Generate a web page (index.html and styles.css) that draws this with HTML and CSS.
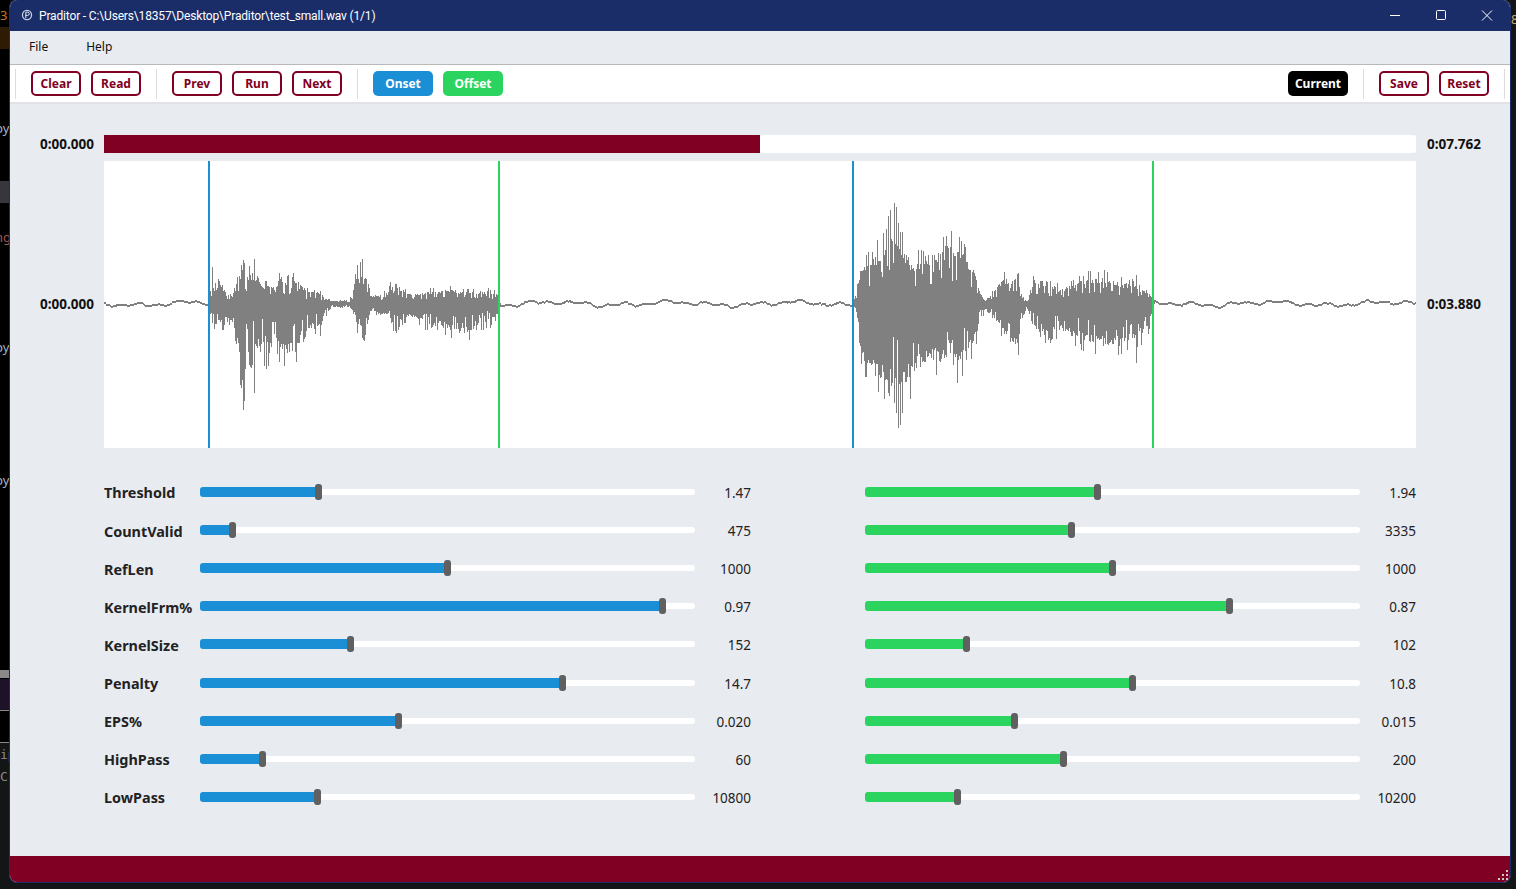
FILE: index.html
```html
<!DOCTYPE html>
<html lang="en">
<head>
    <meta charset="UTF-8">
    <title>Praditor</title>
    <link rel="stylesheet" href="styles.css">
</head>
<body>
    <div class="desktop">
        <div class="bg-strip">
            <span class="bg-block bg-orange"></span>
            <span class="bg-block bg-grey"></span>
            <span class="bg-block bg-light"></span>
            <span class="bg-block bg-purple"></span>
            <span class="bg-block bg-line"></span>
        </div>
        <span class="bg-text bg-t1">3</span>
        <span class="bg-text bg-t2">py</span>
        <span class="bg-text bg-t3">ng</span>
        <span class="bg-text bg-t4">py</span>
        <span class="bg-text bg-t5">py</span>
        <span class="bg-text bg-t6">ip</span>
        <span class="bg-text bg-t7">C</span>
        <span class="bg-text bg-t8">8</span>
    </div>

    <div class="window">
        <div class="titlebar">
            <svg class="app-icon" width="12" height="12" viewBox="0 0 12 12">
                <circle cx="6" cy="6" r="5.2" fill="#c9cfe0"/>
                <circle cx="6" cy="6" r="3.9" fill="#1b2d68"/>
                <path d="M4.8 9V3.2h1.8a1.5 1.5 0 0 1 0 3.2H4.8" fill="none" stroke="#e6e9f2" stroke-width="1"/>
            </svg>
            <span class="title">Praditor - C:\Users\18357\Desktop\Praditor\test_small.wav (1/1)</span>
            <div class="win-controls">
                <svg class="win-btn" width="46" height="31" viewBox="0 0 46 31"><path d="M18 15.5h10" stroke="#fff" fill="none"/></svg>
                <svg class="win-btn" width="46" height="31" viewBox="0 0 46 31"><rect x="18.5" y="10.5" width="9" height="9" rx="1" stroke="#fff" fill="none"/></svg>
                <svg class="win-btn" width="46" height="31" viewBox="0 0 46 31"><path d="M18 10.5l10 10M28 10.5l-10 10" stroke="#fff" fill="none"/></svg>
            </div>
        </div>

        <div class="menubar">
            <span class="menu-item">File</span>
            <span class="menu-item">Help</span>
        </div>

        <div class="toolbar">
            <span class="sep"></span>
            <button class="btn">Clear</button>
            <button class="btn">Read</button>
            <span class="sep"></span>
            <button class="btn">Prev</button>
            <button class="btn">Run</button>
            <button class="btn">Next</button>
            <span class="sep"></span>
            <button class="btn btn-onset">Onset</button>
            <button class="btn btn-offset">Offset</button>
            <span class="spacer"></span>
            <button class="btn btn-current">Current</button>
            <span class="sep"></span>
            <button class="btn">Save</button>
            <button class="btn">Reset</button>
            <span class="sep"></span>
        </div>

        <div class="content">
            <div class="player">
                <span class="time time-left">0:00.000</span>
                <div class="progress"><div class="progress-fill" style="width: 50%"></div></div>
                <span class="time">0:07.762</span>

                <span class="time time-left time-mid">0:00.000</span>
                <div class="wave-box">
                    <canvas id="wave" width="1312" height="287"></canvas>
                    <span class="marker marker-onset" style="left: 104px"></span>
                    <span class="marker marker-offset" style="left: 394px"></span>
                    <span class="marker marker-onset" style="left: 748px"></span>
                    <span class="marker marker-offset" style="left: 1048px"></span>
                </div>
                <span class="time time-mid">0:03.880</span>
            </div>

            <div class="params">
                <div class="param">
                    <span class="param-name">Threshold</span>
                    <div class="track"><div class="fill onset" style="width: 118.5px"><i class="handle"></i></div></div>
                    <span class="param-value">1.47</span>
                    <span></span>
                    <div class="track"><div class="fill offset" style="width: 232.5px"><i class="handle"></i></div></div>
                    <span class="param-value">1.94</span>
                </div>
                <div class="param">
                    <span class="param-name">CountValid</span>
                    <div class="track"><div class="fill onset" style="width: 32.5px"><i class="handle"></i></div></div>
                    <span class="param-value">475</span>
                    <span></span>
                    <div class="track"><div class="fill offset" style="width: 206.5px"><i class="handle"></i></div></div>
                    <span class="param-value">3335</span>
                </div>
                <div class="param">
                    <span class="param-name">RefLen</span>
                    <div class="track"><div class="fill onset" style="width: 247.5px"><i class="handle"></i></div></div>
                    <span class="param-value">1000</span>
                    <span></span>
                    <div class="track"><div class="fill offset" style="width: 247.5px"><i class="handle"></i></div></div>
                    <span class="param-value">1000</span>
                </div>
                <div class="param">
                    <span class="param-name">KernelFrm%</span>
                    <div class="track"><div class="fill onset" style="width: 462.5px"><i class="handle"></i></div></div>
                    <span class="param-value">0.97</span>
                    <span></span>
                    <div class="track"><div class="fill offset" style="width: 364.5px"><i class="handle"></i></div></div>
                    <span class="param-value">0.87</span>
                </div>
                <div class="param">
                    <span class="param-name">KernelSize</span>
                    <div class="track"><div class="fill onset" style="width: 150.5px"><i class="handle"></i></div></div>
                    <span class="param-value">152</span>
                    <span></span>
                    <div class="track"><div class="fill offset" style="width: 101.5px"><i class="handle"></i></div></div>
                    <span class="param-value">102</span>
                </div>
                <div class="param">
                    <span class="param-name">Penalty</span>
                    <div class="track"><div class="fill onset" style="width: 362.5px"><i class="handle"></i></div></div>
                    <span class="param-value">14.7</span>
                    <span></span>
                    <div class="track"><div class="fill offset" style="width: 267.5px"><i class="handle"></i></div></div>
                    <span class="param-value">10.8</span>
                </div>
                <div class="param">
                    <span class="param-name">EPS%</span>
                    <div class="track"><div class="fill onset" style="width: 198.5px"><i class="handle"></i></div></div>
                    <span class="param-value">0.020</span>
                    <span></span>
                    <div class="track"><div class="fill offset" style="width: 149.5px"><i class="handle"></i></div></div>
                    <span class="param-value">0.015</span>
                </div>
                <div class="param">
                    <span class="param-name">HighPass</span>
                    <div class="track"><div class="fill onset" style="width: 62.5px"><i class="handle"></i></div></div>
                    <span class="param-value">60</span>
                    <span></span>
                    <div class="track"><div class="fill offset" style="width: 198.5px"><i class="handle"></i></div></div>
                    <span class="param-value">200</span>
                </div>
                <div class="param">
                    <span class="param-name">LowPass</span>
                    <div class="track"><div class="fill onset" style="width: 117.5px"><i class="handle"></i></div></div>
                    <span class="param-value">10800</span>
                    <span></span>
                    <div class="track"><div class="fill offset" style="width: 92.5px"><i class="handle"></i></div></div>
                    <span class="param-value">10200</span>
                </div>
            </div>
        </div>

        <div class="statusbar">
            <svg class="grip" width="12" height="12" viewBox="0 0 12 12" fill="#c9c9c9">
                <rect x="9" y="0" width="2" height="2"/>
                <rect x="5" y="4" width="2" height="2"/><rect x="9" y="4" width="2" height="2"/>
                <rect x="1" y="8" width="2" height="2"/><rect x="5" y="8" width="2" height="2"/><rect x="9" y="8" width="2" height="2"/>
            </svg>
        </div>
    </div>

    <script src="waveform.js"></script>
</body>
</html>
```

FILE: styles.css
```css
html, body {
    margin: 0;
    padding: 0;
    height: 889px;
    overflow: hidden;
}
body {
    position: relative;
    background-color: #141516;
    font-family: 'Noto Sans', sans-serif;
    color: #222;
}

/* bits of other windows showing behind */
.desktop {
    position: absolute;
    inset: 0;
    overflow: hidden;
}
.bg-strip {
    position: absolute;
    left: 0;
    top: 0;
    width: 10px;
    height: 743px;
    background-color: #000;
}
.bg-block {
    position: absolute;
    left: 0;
    width: 10px;
}
.bg-orange { top: 27px; height: 22px; background-color: #2f1a04; }
.bg-grey { top: 181px; height: 22px; background-color: #36363c; }
.bg-light { top: 670px; height: 8px; background-color: #8a8a8a; }
.bg-purple { top: 679px; height: 31px; background-color: #1d1228; border-bottom: 1px solid #888; }
.bg-line { top: 742px; height: 1px; background-color: #888; }
.bg-text {
    position: absolute;
    font-size: 13px;
    line-height: 16px;
    color: #9fb4c4;
}
.bg-t1 { left: 0; top: 7px; color: #c9741e; }
.bg-t2 { left: -5px; top: 120px; }
.bg-t3 { left: -5px; top: 229px; color: #a0584a; }
.bg-t4 { left: -5px; top: 339px; }
.bg-t5 { left: -5px; top: 472px; }
.bg-t6 { left: 0; top: 747px; font-family: 'DejaVu Sans Mono', monospace; color: #8a8a8a; }
.bg-t7 { left: 0; top: 769px; font-family: 'DejaVu Sans Mono', monospace; color: #8a8a8a; }
.bg-t8 { left: 1511px; top: 11px; color: #c9a86a; }

.window {
    position: absolute;
    left: 9px;
    top: 0;
    width: 1500px;
    height: 882px;
    display: flex;
    flex-direction: column;
    background-color: #e8ebf0;
    border: solid #1b2d68;
    border-width: 0 1px 1px;
    border-radius: 8px;
    overflow: hidden;
}

.titlebar {
    display: flex;
    align-items: center;
    height: 31px;
    flex: none;
    padding-left: 11px;
    background-color: #1b2d68;
    color: #fff;
    font-family: 'Roboto', sans-serif;
    font-size: 12px;
    letter-spacing: -0.16px;
}
.app-icon {
    margin-right: 6px;
    margin-top: -2px;
}
.title {
    flex: 1;
}
.win-controls {
    display: flex;
}
.win-btn {
    display: block;
}

.menubar {
    display: flex;
    align-items: center;
    height: 33px;
    flex: none;
    padding: 0 0 2px 19px;
    box-sizing: border-box;
    gap: 38px;
    font-size: 12px;
    color: #111;
}

.toolbar {
    display: flex;
    align-items: center;
    height: 40px;
    flex: none;
    padding: 0 5px;
    box-sizing: border-box;
    background-color: #fff;
    border-top: 1px solid #b9b9b9;
    border-bottom: 2px solid #e0e2e5;
}
.sep {
    width: 1px;
    height: 30px;
    background-color: #dcdcdc;
    margin: 0 15px;
}
.toolbar .sep:first-child {
    margin-left: 0;
}
.toolbar .sep:last-child {
    margin-right: 0;
}
.spacer {
    flex: 1;
}
.btn {
    width: 50px;
    height: 25px;
    box-sizing: border-box;
    padding: 0;
    background-color: #fff;
    border: 2px solid #7f0022;
    border-radius: 5px;
    color: #7f0022;
    font-family: 'Noto Sans', sans-serif;
    font-weight: bold;
    font-size: 12px;
}
.btn + .btn {
    margin-left: 10px;
}
.btn-onset, .btn-offset, .btn-current {
    width: 60px;
    border: none;
    color: #fff;
}
.btn-onset { background-color: #1b8fd6; }
.btn-offset { background-color: #2ad45e; }
.btn-current { background-color: #000; }

.content {
    flex: 1;
    padding-top: 31px;
}

.player {
    display: grid;
    grid-template-columns: 94px 1312px 94px;
    grid-template-rows: 18px 287px;
    row-gap: 8px;
    align-items: center;
}
.time {
    padding-left: 11px;
    font-family: 'Noto Sans', sans-serif;
    font-weight: bold;
    font-size: 13.5px;
    color: #111;
}
.time.time-left {
    padding: 0 10px 0 0;
    text-align: right;
}
.time.time-mid {
    margin-bottom: 2px;
}
.progress {
    height: 18px;
    background-color: #fff;
    border-radius: 2px;
}
.progress-fill {
    height: 100%;
    background-color: #7f0022;
}
.wave-box {
    position: relative;
    height: 287px;
    background-color: #fff;
}
#wave {
    display: block;
}
.marker {
    position: absolute;
    top: 0;
    bottom: 0;
    width: 2px;
}
.marker-onset { background-color: #1b8fd6; }
.marker-offset { background-color: #2ad45e; }

.params {
    padding: 24.9px 0 0 94px;
}
.param {
    display: grid;
    grid-template-columns: 96px 495px 56px 114px 495px 56px;
    align-items: center;
    height: 38.125px;
}
.param-name {
    padding-top: 2px;
    font-family: 'Noto Sans', sans-serif;
    font-weight: bold;
    font-size: 14.4px;
    white-space: nowrap;
}
.param-value {
    padding-top: 2px;
    text-align: right;
    font-size: 13.5px;
}
.track {
    height: 6px;
    background-color: #fff;
    border-radius: 3px;
    display: flex;
    align-items: center;
}
.fill {
    position: relative;
    height: 10px;
    border-radius: 3px;
}
.fill.onset { background-color: #1b8fd6; }
.fill.offset { background-color: #2ad45e; }
.handle {
    position: absolute;
    right: -3.5px;
    top: -3px;
    width: 7px;
    height: 16px;
    background-color: #606060;
    border-radius: 3px;
}

.statusbar {
    position: relative;
    height: 26px;
    flex: none;
    background-color: #7f0022;
}
.grip {
    position: absolute;
    right: 1px;
    bottom: 0;
}
```

FILE: waveform.js
```js
// envelope keypoints: [x in box, amplitude up, amplitude down]
const speech = [
    [105, 3, 3], [106, 13, 12], [109, 20, 20], [112, 15, 22], [114, 30, 18], [118, 15, 22],
    [122, 8, 15], [128, 10, 20], [133, 28, 35], [136, 32, 70], [139, 35, 85], [142, 15, 40],
    [145, 30, 55], [149, 28, 45], [154, 30, 45], [158, 14, 40], [162, 20, 65], [166, 22, 45],
    [171, 14, 35], [176, 28, 50], [181, 22, 50], [188, 28, 50], [193, 15, 50], [197, 20, 30],
    [202, 12, 30], [208, 12, 25], [216, 10, 25], [221, 5, 15], [224, 5, 8], [227, 2, 3],
    [245, 3, 3], [248, 8, 8], [251, 30, 20], [256, 34, 28], [261, 30, 32], [266, 8, 8],
    [276, 8, 10], [286, 16, 12], [292, 20, 34], [298, 14, 18], [306, 10, 12], [316, 10, 18],
    [326, 12, 24], [336, 12, 22], [346, 14, 28], [356, 12, 30], [366, 12, 28], [376, 12, 24],
    [386, 12, 18], [393, 10, 12], [395, 3, 3]
];
const speech2 = [
    [749, 3, 3], [752, 8, 8], [755, 30, 40], [758, 42, 55], [766, 42, 70], [776, 52, 75],
    [784, 70, 80], [790, 80, 90], [794, 65, 95], [801, 50, 80], [811, 38, 68], [821, 48, 58],
    [831, 48, 58], [841, 58, 60], [851, 58, 62], [861, 48, 58], [868, 38, 42], [872, 24, 32],
    [876, 10, 15], [881, 3, 5], [886, 8, 10], [891, 14, 15], [898, 26, 28], [906, 24, 38],
    [913, 24, 42], [918, 6, 15], [923, 3, 5], [929, 24, 24], [936, 24, 34], [946, 20, 30],
    [956, 14, 26], [966, 18, 32], [976, 22, 36], [986, 26, 40], [996, 26, 42], [1006, 24, 42],
    [1016, 20, 42], [1026, 20, 38], [1036, 14, 32], [1046, 12, 26], [1049, 3, 3]
];
// the biggest peaks: [x in box, up, down]
const peaks = [
    [108, 36, 20], [139, 43, 107], [140, 40, 98], [137, 38, 85], [150, 44, 90], [148, 30, 62],
    [253, 36, 30], [258, 44, 35], [790, 100, 100], [792, 96, 110], [794, 80, 125], [796, 70, 122],
    [784, 82, 90], [914, 30, 52], [1032, 28, 60]
];

let seed = 18357;
function rand() {
    seed = (seed * 16807) % 2147483647;
    return seed / 2147483647;
}

function envelope(points, x) {
    for (let i = 1; i < points.length; i++) {
        if (x <= points[i][0]) {
            const a = points[i - 1];
            const b = points[i];
            const t = (x - a[0]) / (b[0] - a[0]);
            return [a[1] + (b[1] - a[1]) * t, a[2] + (b[2] - a[2]) * t];
        }
    }
    return [0, 0];
}

// most columns sit near the envelope, some drop short, a few stick out
function spread() {
    const r = rand();
    if (r < 0.15) return 1.1 + rand() * 0.2;
    if (r < 0.35) return 0.35 + rand() * 0.3;
    return 0.75 + rand() * 0.25;
}

const ctx = document.getElementById('wave').getContext('2d');
const mid = 142;
let last = mid;
ctx.fillStyle = '#808080';

for (let x = 0; x < 1312; x++) {
    const inFirst = x >= 105 && x <= 395;
    const inSecond = x >= 749 && x <= 1049;
    if (inFirst || inSecond) {
        const env = envelope(inFirst ? speech : speech2, x);
        const up = env[0] * spread();
        const down = env[1] * spread();
        ctx.fillRect(x, Math.round(mid - up), 1, Math.round(up + down) + 1);
        last = mid;
    } else {
        // quiet part, wobbly thin line
        const y = mid + Math.sin(x / 3.1) * 1.2 + Math.sin(x / 7) * 1.3 + Math.sin(x / 19) * 1.5 + (rand() - 0.5) * 1.5;
        const top = Math.round(Math.min(y, last));
        const h = Math.max(2, Math.round(Math.abs(y - last)) + 1);
        ctx.fillRect(x, top, 1, h);
        last = y;
    }
}

for (const p of peaks) {
    ctx.fillRect(p[0], mid - p[1], 1, p[1] + p[2]);
}
```
